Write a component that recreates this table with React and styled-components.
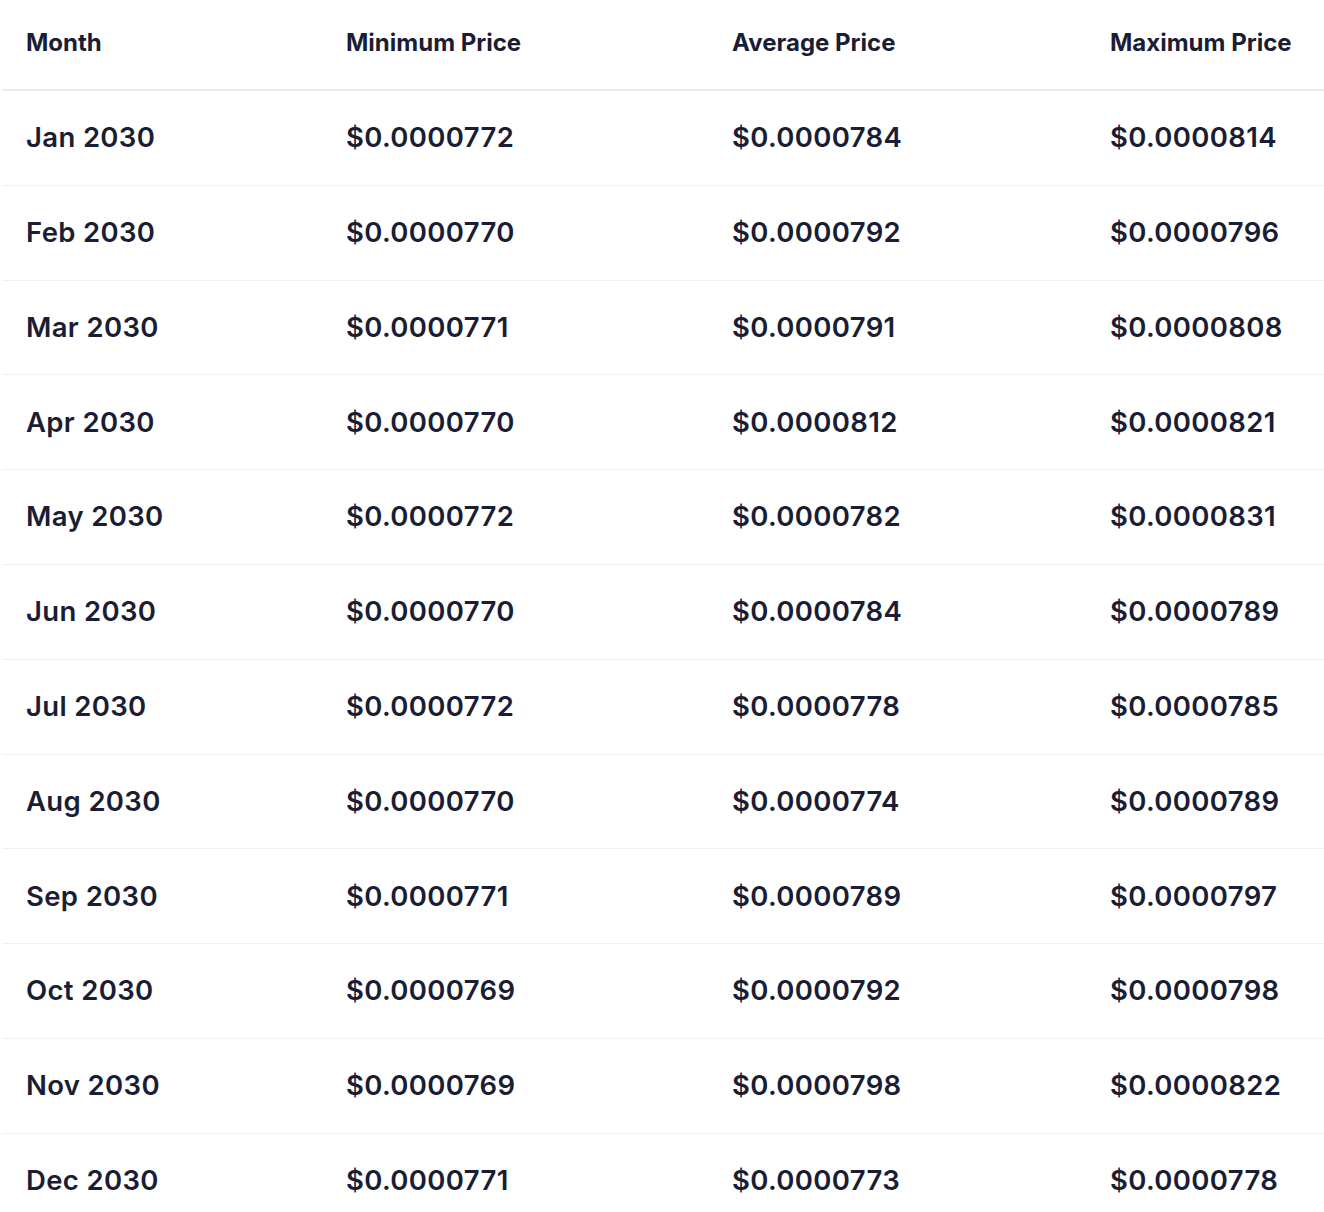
import styled, { createGlobalStyle } from 'styled-components';

const colors = {
  text: '#1a1d33',
  headLine: '#ebebf1',
  rowLine: '#f0f0f2',
  white: '#ffffff'
};

const GlobalStyle = createGlobalStyle`
  html, body {
    margin: 0;
    padding: 0;
    background: ${colors.white};
  }
  body {
    font-family: Inter, "Noto Sans", sans-serif;
    color: ${colors.text};
    -webkit-font-smoothing: antialiased;
  }
`;

const Wrapper = styled.div`
  padding-left: 2px;
  width: 1322px;
`;

const Row = styled.div`
  display: grid;
  grid-template-columns: 320px 386px 378px 1fr;
  align-items: center;
  box-sizing: border-box;
  height: ${(p) => (p.$head ? '91px' : '94.8px')};
  padding-bottom: ${(p) => (p.$head ? '3px' : '0')};
  border-bottom: ${(p) => (p.$last ? 'none' : `1px solid ${p.$head ? colors.headLine : colors.rowLine}`)};
  ${(p) => p.$head && 'border-bottom-width: 2px;'}
`;

const Cell = styled.div`
  padding-left: 24px;
  font-size: ${(p) => (p.$head ? '24px' : '27.5px')};
  font-weight: ${(p) => (p.$head ? 700 : 600)};
  letter-spacing: ${(p) => (p.$head ? '0' : '0.35px')};
  white-space: nowrap;
  line-height: 1;
`;

const rows = [
  ['Jan 2030', '$0.0000772', '$0.0000784', '$0.0000814'],
  ['Feb 2030', '$0.0000770', '$0.0000792', '$0.0000796'],
  ['Mar 2030', '$0.0000771', '$0.0000791', '$0.0000808'],
  ['Apr 2030', '$0.0000770', '$0.0000812', '$0.0000821'],
  ['May 2030', '$0.0000772', '$0.0000782', '$0.0000831'],
  ['Jun 2030', '$0.0000770', '$0.0000784', '$0.0000789'],
  ['Jul 2030', '$0.0000772', '$0.0000778', '$0.0000785'],
  ['Aug 2030', '$0.0000770', '$0.0000774', '$0.0000789'],
  ['Sep 2030', '$0.0000771', '$0.0000789', '$0.0000797'],
  ['Oct 2030', '$0.0000769', '$0.0000792', '$0.0000798'],
  ['Nov 2030', '$0.0000769', '$0.0000798', '$0.0000822'],
  ['Dec 2030', '$0.0000771', '$0.0000773', '$0.0000778']
];

const headers = ['Month', 'Minimum Price', 'Average Price', 'Maximum Price'];

export default function App() {
  return (
    <>
      <GlobalStyle />
      <Wrapper>
        <Row $head>
          {headers.map((h) => (
            <Cell key={h} $head>{h}</Cell>
          ))}
        </Row>
        {rows.map((r, i) => (
          <Row key={r[0]} $last={i === rows.length - 1}>
            {r.map((c, j) => (
              <Cell key={j}>{c}</Cell>
            ))}
          </Row>
        ))}
      </Wrapper>
    </>
  );
}
